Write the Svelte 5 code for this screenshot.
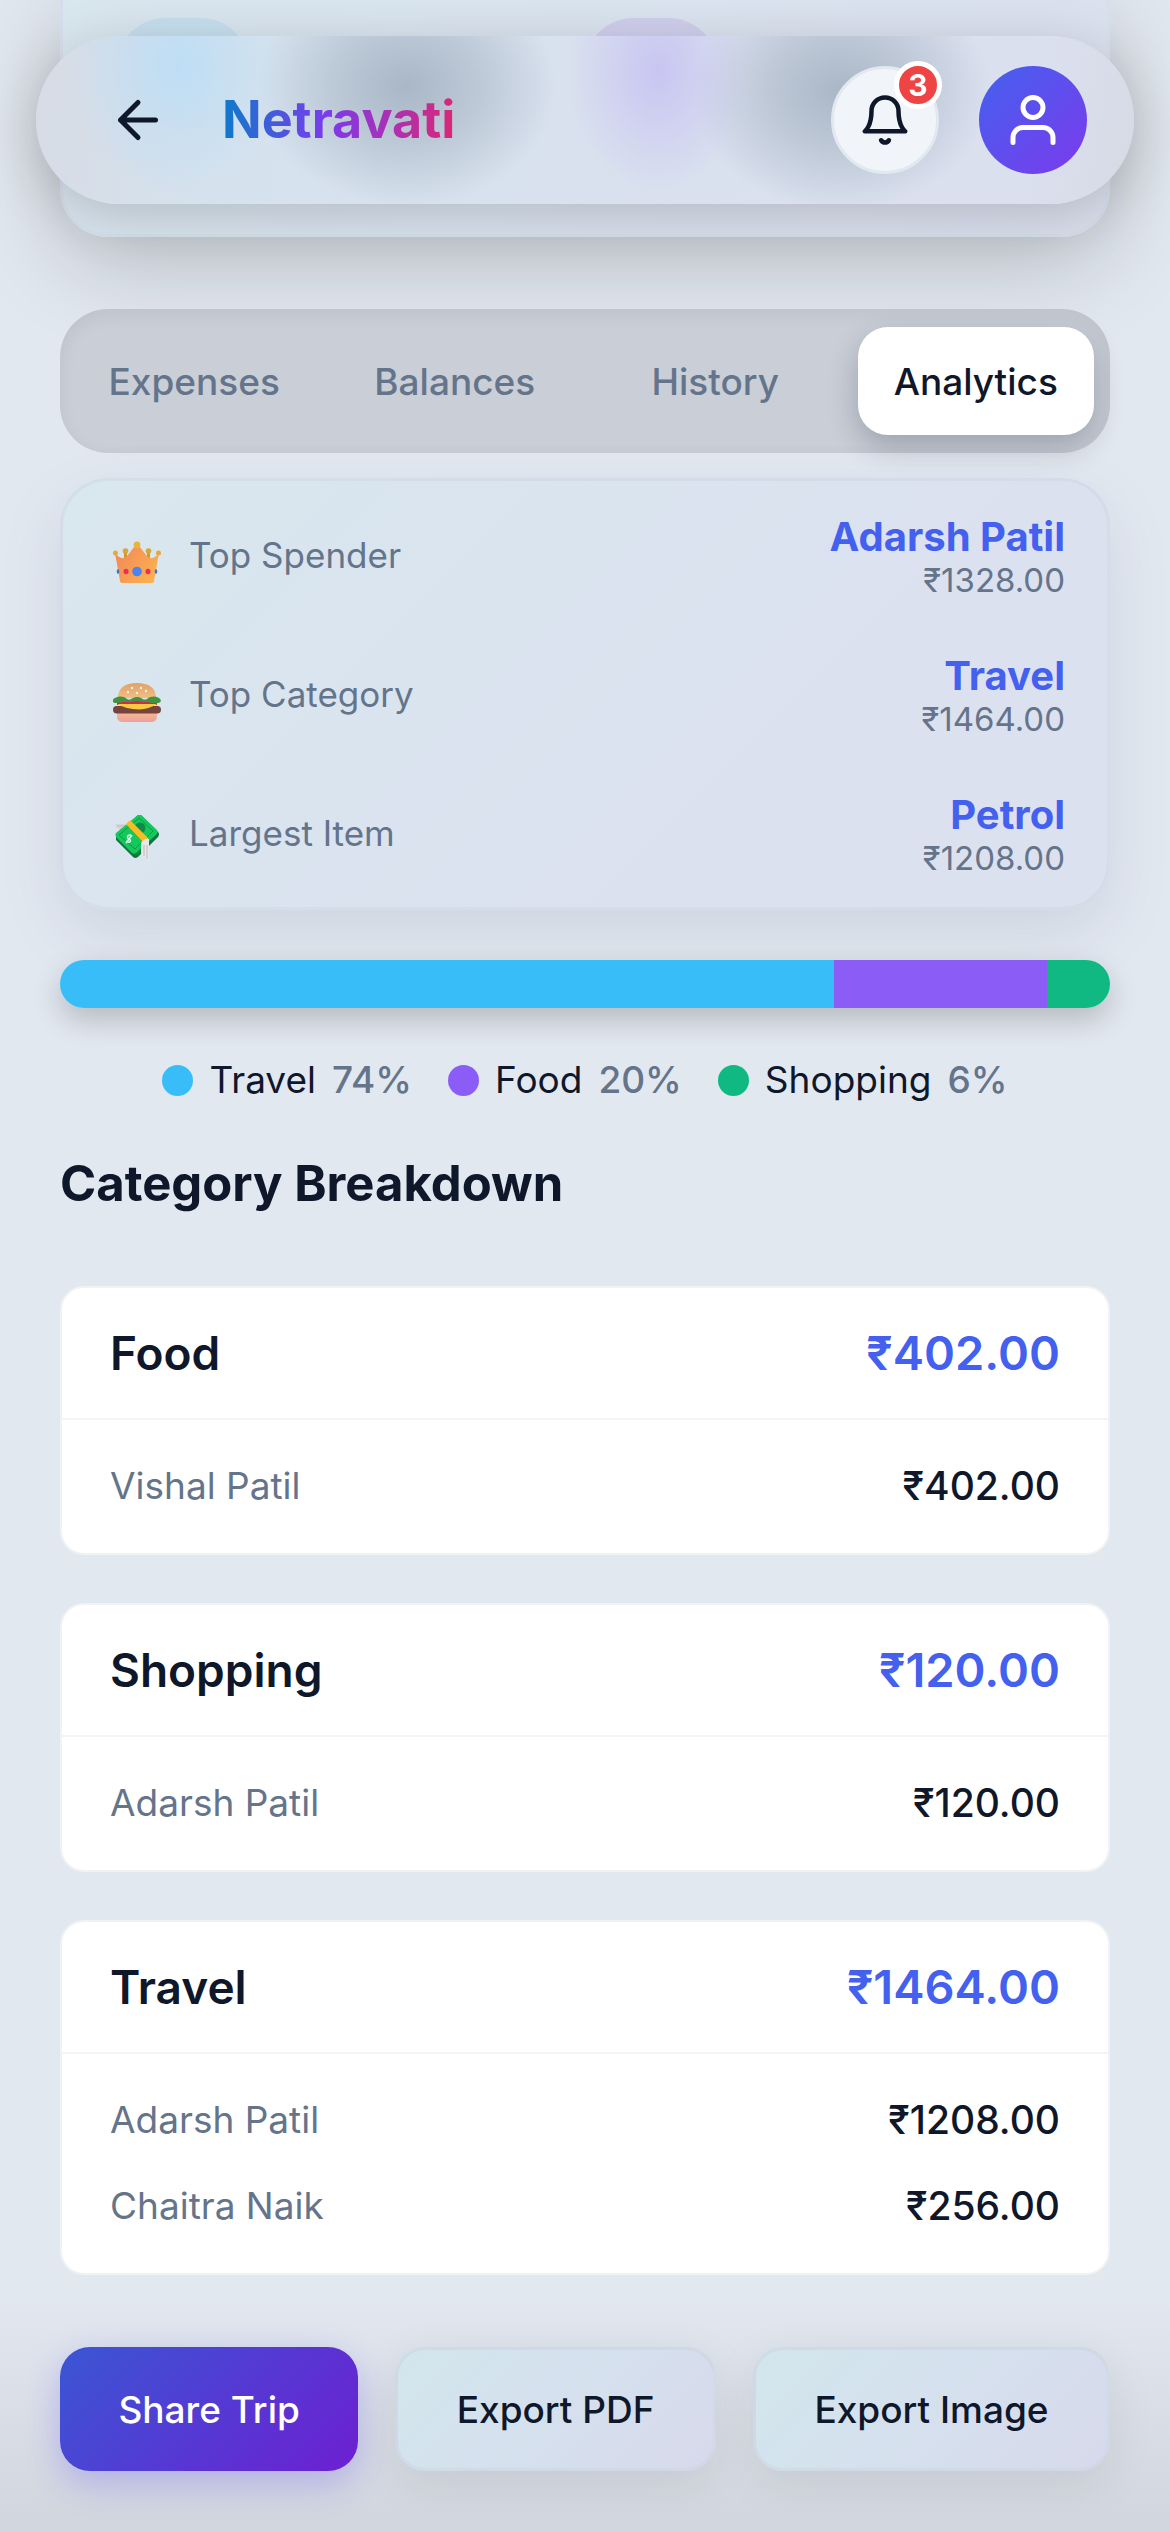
<script lang="ts">
  type Stat = { icon: 'crown' | 'burger' | 'money'; label: string; value: string; amount: number };
  type Share = { name: string; amount: number };
  type Category = { name: string; rows: Share[] };

  const tabs = ['Expenses', 'Balances', 'History', 'Analytics'];
  let activeTab = $state('Analytics');

  const stats: Stat[] = [
    { icon: 'crown', label: 'Top Spender', value: 'Adarsh Patil', amount: 1328 },
    { icon: 'burger', label: 'Top Category', value: 'Travel', amount: 1464 },
    { icon: 'money', label: 'Largest Item', value: 'Petrol', amount: 1208 },
  ];

  const categories: Category[] = [
    { name: 'Food', rows: [{ name: 'Vishal Patil', amount: 402 }] },
    { name: 'Shopping', rows: [{ name: 'Adarsh Patil', amount: 120 }] },
    {
      name: 'Travel',
      rows: [
        { name: 'Adarsh Patil', amount: 1208 },
        { name: 'Chaitra Naik', amount: 256 },
      ],
    },
  ];

  const segments = [
    { name: 'Travel', amount: 1464, color: '#38bdf8' },
    { name: 'Food', amount: 402, color: '#8b5cf6' },
    { name: 'Shopping', amount: 120, color: '#10b981' },
  ];

  const total = segments.reduce((sum, s) => sum + s.amount, 0);
  const share = (n: number) => (n / total) * 100;
  const money = (n: number) => `₹${n.toFixed(2)}`;
  const sum = (rows: Share[]) => rows.reduce((acc, r) => acc + r.amount, 0);
</script>

<header class="topbar">
  <button class="back" aria-label="Back">
    <svg viewBox="0 0 24 24"><path d="M19 12H5M12 19l-7-7 7-7" /></svg>
  </button>
  <h1>Netravati</h1>
  <button class="round bell" aria-label="Notifications">
    <svg viewBox="0 0 24 24">
      <path d="M18 8A6 6 0 0 0 6 8c0 7-3 9-3 9h18s-3-2-3-9" />
      <path d="M13.73 21a2 2 0 0 1-3.46 0" />
    </svg>
    <span class="badge">3</span>
  </button>
  <button class="round user" aria-label="Profile">
    <svg viewBox="0 0 24 24">
      <path d="M20 21v-2a4 4 0 0 0-4-4H8a4 4 0 0 0-4 4v2" />
      <circle cx="12" cy="7" r="4" />
    </svg>
  </button>
</header>

<main>
  <!-- Summary card, mostly scrolled under the top bar -->
  <section class="summary">
    <span class="chip chip-blue"></span>
    <span class="chip chip-violet"></span>
  </section>

  <nav class="tabs">
    {#each tabs as tab}
      <button class:active={activeTab === tab} onclick={() => (activeTab = tab)}>{tab}</button>
    {/each}
  </nav>

  <section class="stats">
    {#each stats as s}
      <div class="stat">
        {#if s.icon === 'crown'}
          <svg class="emoji" viewBox="0 0 48 48">
            <defs>
              <linearGradient id="crown" x1="0" y1="0" x2="1" y2="0.6">
                <stop offset="0" stop-color="#ee8558" />
                <stop offset="0.5" stop-color="#f69a55" />
                <stop offset="1" stop-color="#fbaf4e" />
              </linearGradient>
            </defs>
            <path fill="#c99a2e" d="M11 14h3v10h-3zM34 14h3v10h-3z" />
            <path fill="url(#crown)" d="M2 16c4 5 8 7 12 3 3-3 5-7 8-10q2-2 4 0c3 3 5 7 8 10 4 4 8 2 12-3l-5 28q0 2-2 2H9q-2 0-2-2z" />
            <circle cx="24" cy="8" r="3.400" fill="#e9b43e" />
            <circle cx="12.500" cy="14" r="2.800" fill="#d9a534" />
            <circle cx="35.500" cy="14" r="2.800" fill="#d9a534" />
            <circle cx="2.500" cy="16" r="2.500" fill="#e8a93c" />
            <circle cx="45.500" cy="16" r="2.500" fill="#e8a93c" />
            <circle cx="24" cy="34.500" r="4.800" fill="#4b83f3" />
            <ellipse cx="13" cy="34.500" rx="2.500" ry="2.700" fill="#ee2c55" />
            <ellipse cx="35" cy="34.500" rx="2.500" ry="2.700" fill="#ee2c55" />
            <ellipse cx="5" cy="34.500" rx="1.300" ry="2.300" fill="#3f76b5" />
            <ellipse cx="43" cy="34.500" rx="1.300" ry="2.300" fill="#3f76b5" />
          </svg>
        {:else if s.icon === 'burger'}
          <svg class="emoji" viewBox="0 0 48 48">
            <defs>
              <linearGradient id="bun" x1="0" y1="0" x2="0" y2="1">
                <stop offset="0" stop-color="#dda368" />
                <stop offset="1" stop-color="#f3bd83" />
              </linearGradient>
              <linearGradient id="base" x1="0" y1="0" x2="0" y2="1">
                <stop offset="0" stop-color="#f6bd90" />
                <stop offset="1" stop-color="#ef9f9c" />
              </linearGradient>
            </defs>
            <path fill="url(#base)" d="M4 35h40v5q0 6-6 6H10q-6 0-6-6z" />
            <rect x="0" y="30" width="48" height="7.500" rx="3.700" fill="#76443f" />
            <path fill="#d92350" d="M4 25h40v4H4z" />
            <path fill="#fbc93f" d="M4 28h40q-8 5-18 5.500Q13 33 4 28z" />
            <path fill="url(#bun)" d="M5 22C5 12 12 7 24 7s19 5 19 15z" />
            <path fill="#3f9440" d="M2 22c5-2 8-2 12 1 4 2 5-2 10-2s6 4 10 2c4-3 8-3 12-1 3 2 2 5-1 5-5 1-8-1-11-1-4 1-6-1-10-1s-6 2-9 1c-4-1-8 1-12 1-4 0-4-4-1-5z" />
            <g fill="#fff3dc">
              <circle cx="15" cy="16" r="1.200" /><circle cx="19" cy="12" r="1.200" />
              <circle cx="24" cy="17" r="1.200" /><circle cx="28" cy="12" r="1.200" />
              <circle cx="33" cy="15" r="1.200" />
            </g>
          </svg>
        {:else}
          <svg class="emoji" viewBox="0 0 48 48">
            <path fill="#d8d6d8" d="M2 9h15l-7 11c-1-3-4-3-4-6-2 0-3-2-4-5z" />
            <path fill="none" stroke="#bbb9bd" d="M4 11h12M7 14h8" />
            <path fill="#087a40" d="M25 0q2-1 3 0l17 17q2 2 0 5L25 42q-3 2-5 0L3 25v-5z" />
            <path fill="#16c75b" d="M25 0q2-1 3 0l16 15q1 2 0 4L23 38q-2 1-4 0L3 22q-1-2 0-4z" />
            <path fill="none" stroke="#0b9d48" d="M26 3 40 16 22 34 6 20z" />
            <circle cx="27" cy="13" r="5.500" fill="#0b8d48" />
            <path fill="#fbbb22" d="m13 9 4-4 18 18v6h-3z" />
            <path fill="none" stroke="#d9ffe5" stroke-width="1.500" d="M19 21c-4-3-6 2-3 3s1 5-3 2M19 20l-6 8" />
            <path fill="#e9e7e9" d="M28 28q3-5 8-4v22c-3 0-3-4-5-4s-3-3-3-6z" />
            <path fill="none" stroke="#bcb9bd" d="M31 30v11M34 30v14" />
          </svg>
        {/if}
        <span class="label">{s.label}</span>
        <div class="value">
          <strong>{s.value}</strong>
          <span>{money(s.amount)}</span>
        </div>
      </div>
    {/each}
  </section>

  <div class="bar">
    {#each segments as s}
      <div style="width: {share(s.amount)}%; background: {s.color}"></div>
    {/each}
  </div>

  <ul class="legend">
    {#each segments as s}
      <li>
        <i style="background: {s.color}"></i>
        <span>{s.name}</span>
        <b>{Math.round(share(s.amount))}%</b>
      </li>
    {/each}
  </ul>

  <h2>Category Breakdown</h2>

  <div class="categories">
    {#each categories as c}
      <section class="category">
        <h3>{c.name} <span>{money(sum(c.rows))}</span></h3>
        <dl>
          {#each c.rows as r}
            <div>
              <dt>{r.name}</dt>
              <dd>{money(r.amount)}</dd>
            </div>
          {/each}
        </dl>
      </section>
    {/each}
  </div>

  <div class="actions">
    <button class="primary">Share Trip</button>
    <button>Export PDF</button>
    <button>Export Image</button>
  </div>
</main>

<style>
  :global(body) {
    background: #e2e8f0;
    color: #0f172a;
    font-family: Inter, 'Liberation Sans', sans-serif;
  }
  button {
    border: 0;
    padding: 0;
    font: inherit;
    color: inherit;
    cursor: pointer;
  }
  h1, h2, h3, ul, dl, dd { margin: 0; padding: 0; }

  /* ── Top bar ── */
  .topbar {
    position: fixed;
    top: 36px;
    left: 36px;
    right: 36px;
    z-index: 2;
    box-sizing: border-box;
    height: 168px;
    padding: 0 47px 0 72px;
    display: flex;
    align-items: center;
    border-radius: 84px;
    /* colour of the scrolled content seen through the glass */
    background:
      radial-gradient(ellipse 110px 130px at 142px 30px, rgba(186, 221, 246, 0.85), rgba(186, 221, 246, 0)),
      radial-gradient(ellipse 150px 120px at 370px 50px, rgba(158, 172, 188, 0.8), rgba(158, 172, 188, 0.45) 50%, rgba(158, 172, 188, 0)),
      radial-gradient(ellipse 90px 120px at 622px 35px, rgba(198, 192, 242, 0.85), rgba(198, 192, 242, 0)),
      radial-gradient(ellipse 150px 120px at 805px 55px, rgba(158, 172, 188, 0.8), rgba(158, 172, 188, 0.45) 50%, rgba(158, 172, 188, 0)),
      linear-gradient(100deg, #d7dbe5 0%, #d5e2ed 18%, #d8e1ee 45%, #dbe0ef 90%, #d6dae4 100%);
    box-shadow: 0 12px 54px rgba(0, 0, 0, 0.18);
  }
  .topbar svg {
    display: block;
    width: 60px;
    height: 60px;
    fill: none;
    stroke: currentColor;
    stroke-width: 2;
    stroke-linecap: round;
    stroke-linejoin: round;
  }
  .back { background: none; margin-right: 54px; }
  h1 {
    margin-right: auto;
    font-size: 52px;
    line-height: 66px;
    font-weight: 700;
    color: transparent;
    background: linear-gradient(90deg, #0e7acb, #7c3aed 45%, #db2777);
    -webkit-background-clip: text;
    background-clip: text;
  }
  .round {
    position: relative;
    box-sizing: border-box;
    width: 108px;
    height: 108px;
    border-radius: 50%;
    display: grid;
    place-items: center;
  }
  .bell {
    margin-right: 40px;
    background: #f1f5f9;
    border: 3px solid #e2e8f0;
  }
  .topbar .bell svg { width: 54px; height: 54px; }
  .user {
    color: #fff;
    background: linear-gradient(135deg, #4361ee, #7c3aed);
  }
  .badge {
    position: absolute;
    top: -8px;
    right: -6px;
    box-sizing: border-box;
    width: 48px;
    height: 48px;
    border: 5px solid #fff;
    border-radius: 50%;
    background: #ef4444;
    color: #fff;
    font-size: 30px;
    line-height: 38px;
    font-weight: 700;
    text-align: center;
  }

  /* ── Page ── */
  main {
    padding: 0 60px 63px;
    background: linear-gradient(to top, #d1d5dd, rgba(209, 213, 221, 0) 240px);
  }
  .summary {
    box-sizing: border-box;
    height: 237px;
    margin-bottom: 72px;
    padding: 18px 54px;
    display: grid;
    grid-template-columns: 1fr 1fr;
    border: 3px solid rgba(210, 220, 232, 0.5);
    border-top: 0;
    border-radius: 0 0 48px 48px;
    background: linear-gradient(135deg, #d8e6ee, #dae3ef 50%, #dbdfee);
    box-shadow: 0 24px 96px rgba(0, 0, 0, 0.2);
  }
  .chip {
    width: 132px;
    height: 132px;
    border-radius: 48px;
  }
  .chip-blue { background: #c6deed; }
  .chip-violet { background: #d0cfec; }

  /* ── Tabs ── */
  .tabs {
    display: grid;
    grid-template-columns: repeat(4, 1fr);
    gap: 24px;
    margin-bottom: 25px;
    padding: 18px 16px;
    border-radius: 48px;
    background: #c9ced7;
    box-shadow: inset 0 6px 18px rgba(0, 0, 0, 0.06);
  }
  .tabs button {
    height: 108px;
    border-radius: 30px;
    background: none;
    color: #64748b;
    font-size: 37px;
    font-weight: 500;
  }
  .tabs .active {
    background: #fff;
    color: #0f172a;
    box-shadow: 0 12px 30px rgba(15, 23, 42, 0.24);
  }

  /* ── Highlights ── */
  .stats {
    display: grid;
    gap: 53px;
    margin-bottom: 50px;
    padding: 31px 42px 31px 50px;
    border: 3px solid rgba(203, 213, 225, 0.45);
    border-radius: 48px;
    background: linear-gradient(135deg, #d9e7ee, #dae4ef 40%, #dce1ef 65%, #dce1ef);
    box-shadow: 0 24px 60px rgba(100, 116, 150, 0.16);
  }
  .stat { display: flex; align-items: center; }
  .emoji {
    width: 48px;
    height: 48px;
    margin: 12px 28px 0 0;
  }
  .label {
    color: #64748b;
    font-size: 35px;
    line-height: 44px;
  }
  .value {
    display: grid;
    margin-left: auto;
    text-align: right;
  }
  .value strong {
    color: #4361ee;
    font-size: 40px;
    line-height: 50px;
    font-weight: 700;
  }
  .value span {
    color: #64748b;
    font-size: 33px;
    line-height: 36px;
  }

  /* ── Split bar and legend ── */
  .bar {
    display: flex;
    height: 48px;
    margin-bottom: 48px;
    border-radius: 24px;
    overflow: hidden;
    box-shadow: 0 12px 30px rgba(0, 0, 0, 0.2);
  }
  .legend {
    display: flex;
    justify-content: center;
    gap: 36px;
    margin-bottom: 50px;
    list-style: none;
    font-size: 37px;
    line-height: 48px;
  }
  .legend li { display: flex; align-items: center; gap: 16px; }
  .legend i { width: 31px; height: 31px; border-radius: 50%; }
  .legend b { color: #64748b; font-weight: 500; }

  /* ── Breakdown ── */
  h2 {
    margin-bottom: 72px;
    font-size: 49px;
    line-height: 60px;
    font-weight: 700;
  }
  .categories { display: grid; gap: 48px; }
  .category {
    border: 2px solid #f1f2f4;
    border-radius: 24px;
    background: #fff;
  }
  h3 {
    display: flex;
    justify-content: space-between;
    padding: 36px 48px;
    border-bottom: 2px solid #f3f4f6;
    font-size: 46px;
    line-height: 58px;
    font-weight: 600;
  }
  h3 span { color: #4361ee; font-size: 47px; }
  dl {
    display: grid;
    gap: 38px;
    padding: 42px 48px 43px;
    font-size: 37px;
    line-height: 48px;
  }
  dl div { display: flex; justify-content: space-between; }
  dt { color: #64748b; }
  dd { font-size: 39px; font-weight: 500; }

  /* ── Actions ── */
  .actions {
    display: flex;
    gap: 37px;
    margin-top: 72px;
  }
  .actions button {
    flex: 1 1 auto;
    height: 124px;
    border: 3px solid rgba(203, 213, 225, 0.6);
    border-radius: 30px;
    background: linear-gradient(135deg, #d2e6ec, #d5e1ee 45%, #d7d9eb);
    box-shadow: 0 12px 48px rgba(0, 0, 0, 0.08);
    font-size: 37px;
    font-weight: 500;
  }
  .actions .primary {
    border: 0;
    background: linear-gradient(135deg, #3a56d4, #6d1fd2);
    box-shadow: 0 12px 36px rgba(99, 80, 240, 0.32);
    color: #fff;
  }
</style>
